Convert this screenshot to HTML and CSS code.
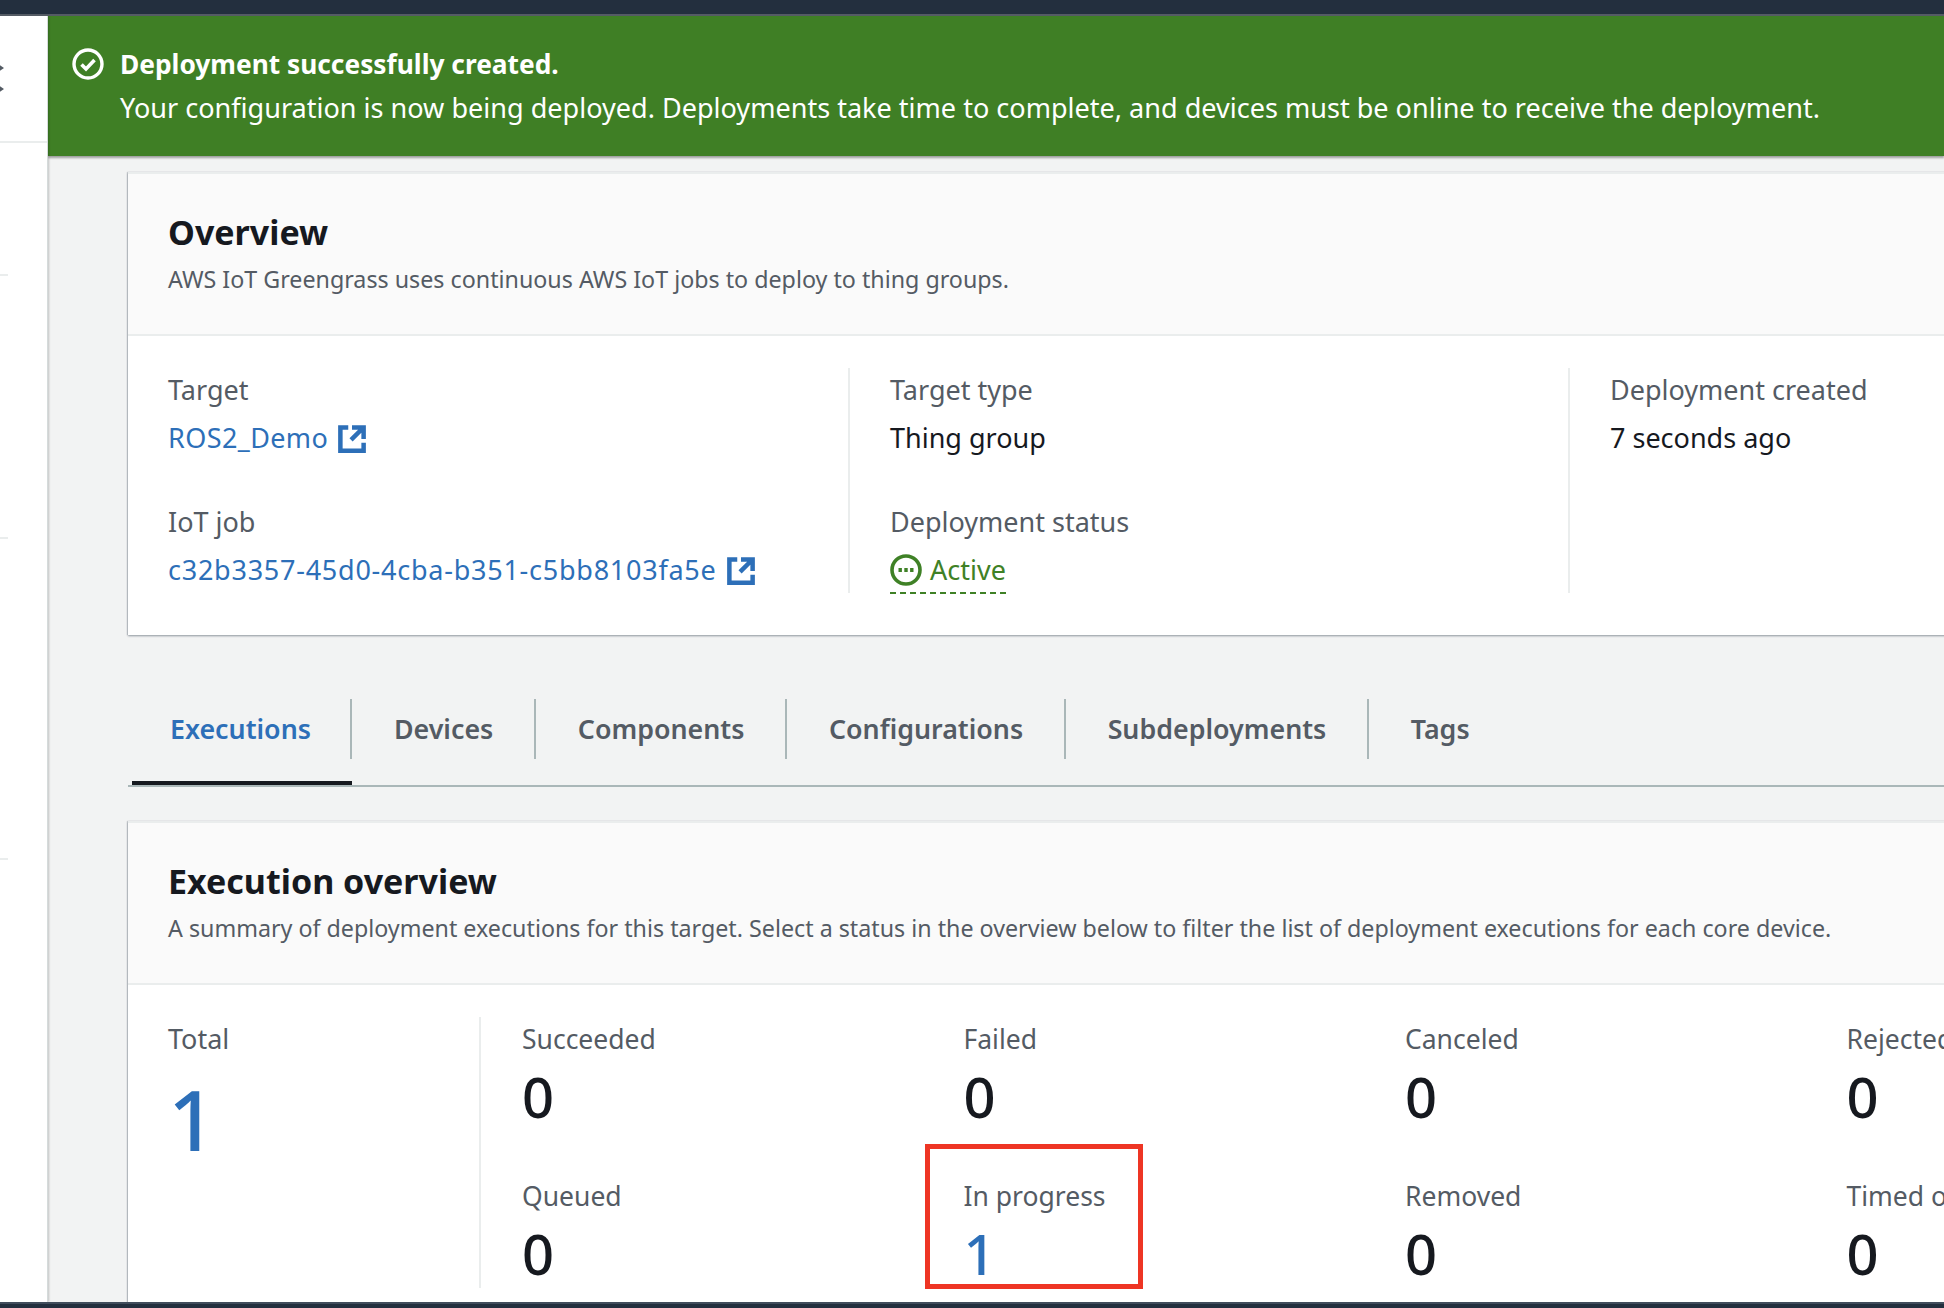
FILE: index.html
```html
<!DOCTYPE html>
<html lang="en">
<head>
    <meta charset="UTF-8">
    <title>Deployment</title>
    <link rel="stylesheet" href="styles.css">
</head>
<body>
    <div class="top-bar"></div>

    <div class="layout">
        <div class="side-nav">
            <svg class="side-toggle" width="6" height="30" viewBox="0 0 6 30">
                <path d="M-3 0 4 5-3 10Z M-3 21 4 26-3 31Z" fill="#545b64"/>
            </svg>
            <div class="side-line side-line-full"></div>
            <div class="side-line side-line-a"></div>
            <div class="side-line side-line-b"></div>
            <div class="side-line side-line-c"></div>
        </div>

        <div class="main">
            <div class="flash">
                <svg class="flash-icon" viewBox="0 0 32 32" width="32" height="32">
                    <circle cx="16" cy="16" r="14" fill="none" stroke="#fff" stroke-width="3.4"/>
                    <path d="M9.5 16.5 14 21 22.5 12" fill="none" stroke="#fff" stroke-width="3.6"/>
                </svg>
                <div>
                    <div class="flash-title">Deployment successfully created.</div>
                    <div class="flash-text">Your configuration is now being deployed. Deployments take time to complete, and devices must be online to receive the deployment.</div>
                </div>
            </div>

            <div class="content">
                <div class="card">
                    <div class="card-head">
                        <h2>Overview</h2>
                        <p>AWS IoT Greengrass uses continuous AWS IoT jobs to deploy to thing groups.</p>
                    </div>
                    <div class="details">
                        <div class="detail-col">
                            <div class="label">Target</div>
                            <div class="value"><a class="link"><span class="target-name">ROS2_Demo</span>
                                <svg class="ext-icon" viewBox="0 0 16 16" width="30" height="30"><path d="M14.2 8V1.8H8M14 2 7.5 8.5M6 1.8H1.8v12.4h12.4V10" fill="none" stroke="#2d6fb8" stroke-width="2.4"/></svg>
                            </a></div>
                            <div class="label label-next">IoT job</div>
                            <div class="value"><a class="link"><span class="job-id">c32b3357-45d0-4cba-b351-c5bb8103fa5e</span>
                                <svg class="ext-icon" viewBox="0 0 16 16" width="30" height="30"><path d="M14.2 8V1.8H8M14 2 7.5 8.5M6 1.8H1.8v12.4h12.4V10" fill="none" stroke="#2d6fb8" stroke-width="2.4"/></svg>
                            </a></div>
                        </div>
                        <div class="detail-col">
                            <div class="label">Target type</div>
                            <div class="value">Thing group</div>
                            <div class="label label-next">Deployment status</div>
                            <div class="value"><span class="status">
                                <svg viewBox="0 0 32 32" width="32" height="32"><circle cx="16" cy="16" r="14" fill="none" stroke="#3f8126" stroke-width="3.6"/><path d="M8.5 14h3.4v4H8.5zM14.3 14h3.4v4h-3.4zM20.1 14h3.4v4h-3.4z" fill="#3f8126"/></svg>
                                Active</span></div>
                        </div>
                        <div class="detail-col">
                            <div class="label">Deployment created</div>
                            <div class="value">7 seconds ago</div>
                        </div>
                    </div>
                </div>

                <div class="tabs">
                    <div class="tab tab-active"><span>Executions</span></div>
                    <div class="tab"><span>Devices</span></div>
                    <div class="tab"><span>Components</span></div>
                    <div class="tab"><span>Configurations</span></div>
                    <div class="tab"><span>Subdeployments</span></div>
                    <div class="tab tab-last"><span>Tags</span></div>
                </div>

                <div class="card">
                    <div class="card-head">
                        <h2>Execution overview</h2>
                        <p>A summary of deployment executions for this target. Select a status in the overview below to filter the list of deployment executions for each core device.</p>
                    </div>
                    <div class="summary">
                        <div class="total">
                            <div class="label">Total</div>
                            <div class="total-num">1</div>
                        </div>
                        <div class="stats">
                            <div class="stat"><div class="label">Succeeded</div><div class="num">0</div></div>
                            <div class="stat"><div class="label">Failed</div><div class="num">0</div></div>
                            <div class="stat"><div class="label">Canceled</div><div class="num">0</div></div>
                            <div class="stat"><div class="label">Rejected</div><div class="num">0</div></div>
                            <div class="stat"><div class="label">Queued</div><div class="num">0</div></div>
                            <div class="stat stat-marked"><div class="label">In progress</div><div class="num num-link">1</div></div>
                            <div class="stat"><div class="label">Removed</div><div class="num">0</div></div>
                            <div class="stat"><div class="label">Timed out</div><div class="num">0</div></div>
                        </div>
                    </div>
                </div>
            </div>
        </div>
    </div>

    <div class="bottom-bar"></div>
</body>
</html>
```

FILE: styles.css
```css
*{
    margin: 0;
    padding: 0;
    box-sizing: border-box;
}

html, body{
    height: 100%;
    overflow: hidden;
}

body{
    display: flex;
    flex-direction: column;
    font-family: "Noto Sans", "Open Sans", sans-serif;
    font-size: 27px;
    color: #16191f;
    background-color: #f2f3f3;
}

.top-bar{
    height: 16px;
    flex-shrink: 0;
    background-color: #232f3e;
    border-bottom: 2px solid #545b64;
}

.bottom-bar{
    height: 6px;
    flex-shrink: 0;
    background-color: #232f3e;
    border-top: 2px solid #414d5c;
}

.layout{
    flex: 1;
    display: flex;
    min-height: 0;
    overflow: hidden;
}

/* left nav, collapsed and cut off */
.side-nav{
    width: 48px;
    flex-shrink: 0;
    background-color: #fff;
    border-right: 1px solid #d5dbdb;
    box-shadow: 1px 0 2px rgba(0, 0, 0, 0.2);
    z-index: 1;
}

.side-toggle{
    display: block;
    margin-top: 47px;
}

.side-line{
    height: 2px;
    width: 8px;
    background-color: #eaeded;
}

.side-line-full{
    width: 100%;
    margin-top: 48px;
}

.side-line-a{
    margin-top: 131px;
}

.side-line-b{
    margin-top: 261px;
}

.side-line-c{
    margin-top: 319px;
}

.main{
    flex: 1;
    min-width: 0;
    overflow: hidden;
}

.flash{
    height: 140px;
    display: flex;
    gap: 16px;
    padding: 26px 0 0 24px;
    background-color: #3f7f25;
    color: #fff;
    line-height: 44px;
    box-shadow: 0 2px 2px rgba(0, 0, 0, 0.35);
}

.flash-icon{
    flex-shrink: 0;
    margin-top: 6px;
}

.flash-title{
    font-size: 26.3px;
    font-weight: 700;
}

.flash-text{
    font-size: 27.06px;
    white-space: nowrap;
}

.content{
    width: 1900px;
    padding: 16px 0 0 80px;
}

.card{
    background-color: #fff;
    box-shadow: 0 1px 2px rgba(0, 21, 41, 0.4), -1px 0 1px rgba(0, 21, 41, 0.15);
}

.card-head{
    height: 164px;
    padding: 34px 40px 0;
    background-color: #fafafa;
    border-top: 2px solid #eaeded;
    border-bottom: 2px solid #eaeded;
}

.card-head h2{
    font-size: 34px;
    font-weight: 700;
    line-height: 48px;
}

.card-head p{
    font-size: 23.25px;
    line-height: 46px;
    color: #545b64;
    white-space: nowrap;
}

.label{
    line-height: 44px;
    color: #545b64;
    white-space: nowrap;
}

.value{
    height: 52px;
    line-height: 51px;
    white-space: nowrap;
}

.label-next{
    margin-top: 36px;
}

.link{
    color: #2d6fb8;
}

.target-name{
    letter-spacing: 0.4px;
}

.job-id{
    letter-spacing: 0.75px;
}

.details{
    display: grid;
    grid-template-columns: 680px 720px 1fr;
    height: 299px;
    padding: 32px 0 42px 40px;
}

.detail-col{
    height: 225px;
}

.detail-col + .detail-col{
    padding-left: 40px;
    border-left: 2px solid #eaeded;
}

.ext-icon{
    vertical-align: -6px;
    margin-left: 2px;
}

.status{
    display: inline-flex;
    align-items: center;
    gap: 8px;
    height: 50px;
    padding-top: 3px;
    vertical-align: top;
    color: #3f8126;
    border-bottom: 2px dashed #3f8126;
}

.tabs{
    display: flex;
    height: 152px;
    margin-bottom: 34px;
    border-bottom: 2px solid #aab7b8;
}

.tab{
    height: 150px;
    padding-top: 64px;
    font-size: 26.8px;
    font-weight: 600;
    color: #545b64;
}

.tab span{
    display: block;
    height: 60px;
    line-height: 60px;
    padding: 0 40.5px 0 42px;
    border-right: 2px solid #aab7b8;
    white-space: nowrap;
}

.tab-active{
    margin-left: 4px;
    border-bottom: 4px solid #16191f;
    color: #2d6fb8;
}

.tab-active span{
    padding: 0 39px 0 38px;
}

.tab-last span{
    border-right: 0;
}

.summary{
    display: flex;
    padding: 32px 0 60px 40px;
}

.total{
    width: 311px;
    height: 271px;
    flex-shrink: 0;
}

.total-num{
    font-size: 84px;
    font-weight: 500;
    line-height: 116px;
    color: #2d6fb8;
}

.stats{
    display: grid;
    grid-template-columns: repeat(4, 441.5px);
    grid-auto-rows: 157px;
    height: 271px;
    border-left: 2px solid #eaeded;
    padding-left: 41px;
}

.stat .label{
    font-size: 26.5px;
}

.num{
    font-size: 56px;
    font-weight: 500;
    line-height: 70px;
}

.num-link{
    color: #2d6fb8;
}

/* red highlight drawn over the screenshot */
.stat-marked{
    position: relative;
}

.stat-marked::after{
    content: "";
    position: absolute;
    left: -39px;
    top: -30px;
    width: 218px;
    height: 145px;
    box-sizing: border-box;
    border: 5px solid #ee3524;
}
```
